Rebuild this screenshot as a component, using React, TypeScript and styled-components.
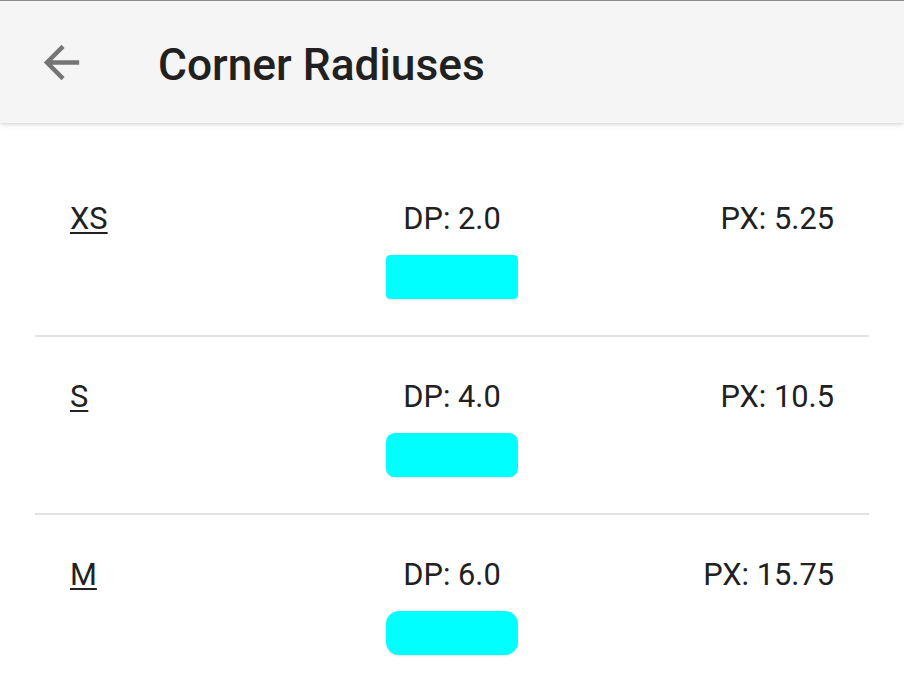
import React from "react";
import styled, { createGlobalStyle } from "styled-components";

const GlobalStyle = createGlobalStyle`
  html, body {
    margin: 0;
    padding: 0;
    background: #ffffff;
  }
  body {
    font-family: Roboto, "Noto Sans", "Liberation Sans", sans-serif;
    color: #212121;
    overflow: hidden;
  }
`;

const Screen = styled.div`
  width: 904px;
  height: 684px;
  display: flex;
  flex-direction: column;
  background: #ffffff;
  overflow: hidden;
`;

const AppBar = styled.header`
  position: relative;
  z-index: 1;
  height: 122px;
  border-top: 1px solid #8c8c8c;
  background: #f5f5f5;
  display: flex;
  align-items: center;
  box-shadow: 0 1px 3px rgba(0, 0, 0, 0.12), 0 3px 6px rgba(0, 0, 0, 0.06);
  flex-shrink: 0;
`;

const BackButton = styled.button`
  width: 53px;
  height: 53px;
  margin-left: 35px;
  padding: 0;
  border: none;
  background: transparent;
  display: flex;
  align-items: center;
  justify-content: center;
  color: #757575;
`;

const Title = styled.h1`
  margin: 5px 0 0 70px;
  font-size: 44.3px;
  font-weight: 500;
  color: #212121;
  letter-spacing: 0;
`;

const List = styled.div`
  padding-top: 36px;
  display: flex;
  flex-direction: column;
`;

const Item = styled.div`
  margin: 0 35px;
  padding: 42px 35px 36px;
  border-bottom: 2px solid #e2e2e2;
  display: flex;
  flex-direction: column;
  align-items: stretch;
`;

const InfoRow = styled.div`
  display: grid;
  grid-template-columns: 1fr auto 1fr;
  align-items: center;
  font-size: 30.8px;
  line-height: 36px;
  color: #212121;
`;

const Label = styled.span`
  justify-self: start;
  text-decoration: underline;
  text-underline-offset: 3px;
  text-decoration-thickness: 2px;
`;

const Dp = styled.span`
  justify-self: center;
`;

const Px = styled.span`
  justify-self: end;
`;

const Sample = styled.div<{ $radius: number }>`
  align-self: center;
  margin-top: 18px;
  width: 132px;
  height: 44px;
  background: #00ffff;
  border-radius: ${(p) => p.$radius}px;
  box-shadow: 0 1px 2px rgba(0, 0, 0, 0.12);
`;

const DENSITY = 2.625;
const SCALE = 904 / 1080;

const items = [
  { name: "XS", dp: 2 },
  { name: "S", dp: 4 },
  { name: "M", dp: 6 },
];

export default function App() {
  return (
    <Screen>
      <GlobalStyle />
      <AppBar>
        <BackButton aria-label="Back">
          <svg width="53" height="53" viewBox="0 0 24 24" fill="currentColor">
            <path d="M20 11H7.83l5.59-5.59L12 4l-8 8 8 8 1.41-1.41L7.83 13H20v-2z" />
          </svg>
        </BackButton>
        <Title>Corner Radiuses</Title>
      </AppBar>
      <List>
        {items.map((it) => (
          <Item key={it.name}>
            <InfoRow>
              <Label>{it.name}</Label>
              <Dp>DP: {it.dp.toFixed(1)}</Dp>
              <Px>PX: {String(it.dp * DENSITY)}</Px>
            </InfoRow>
            <Sample $radius={it.dp * DENSITY * SCALE} />
          </Item>
        ))}
      </List>
    </Screen>
  );
}
